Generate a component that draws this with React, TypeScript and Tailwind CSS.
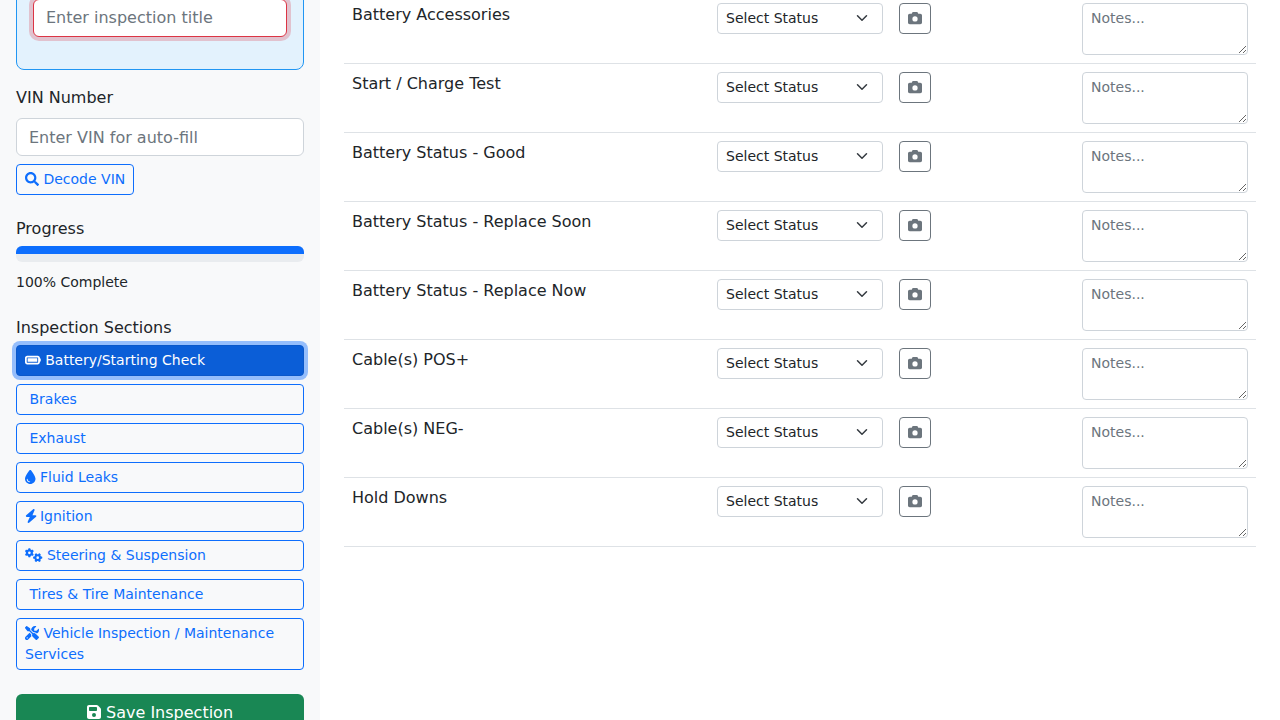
import { FaCamera, FaDroplet, FaBolt, FaGears, FaScrewdriverWrench, FaFloppyDisk, FaBatteryFull } from "react-icons/fa6";
import { FaSearch } from "react-icons/fa";
import type { ReactNode } from "react";

const font = "font-['DejaVu_Sans','Liberation_Sans',sans-serif]";

const sections: { label: string; icon?: ReactNode; active?: boolean }[] = [
  { label: "Battery/Starting Check", icon: <FaBatteryFull className="inline-block w-[15.75px] h-[14px] align-[-2px]" />, active: true },
  { label: "Brakes" },
  { label: "Exhaust" },
  { label: "Fluid Leaks", icon: <FaDroplet className="inline-block w-[10.5px] h-[14px] align-[-2px]" /> },
  { label: "Ignition", icon: <FaBolt className="inline-block w-[12.25px] h-[14px] align-[-2px] -mr-[1.75px]" /> },
  { label: "Steering & Suspension", icon: <FaGears className="inline-block w-[17.5px] h-[14px] align-[-2px]" /> },
  { label: "Tires & Tire Maintenance" },
  { label: "Vehicle Inspection / Maintenance Services", icon: <FaScrewdriverWrench className="inline-block w-[14px] h-[14px] align-[-2px]" /> },
];

const items = [
  "Battery Accessories",
  "Start / Charge Test",
  "Battery Status - Good",
  "Battery Status - Replace Soon",
  "Battery Status - Replace Now",
  "Cable(s) POS+",
  "Cable(s) NEG-",
  "Hold Downs",
];

function Row({ label }: { label: string }) {
  return (
    <tr>
      <td className="p-2 align-top border-b border-[#dee2e6] text-[#212529]">{label}</td>
      <td className="p-2 align-top border-b border-[#dee2e6]">
        <div className="relative h-[31px]">
          <select className="appearance-none block w-full h-[31px] bg-white border border-[#ced4da] rounded-[4px] pl-2 pr-9 py-1 text-[14px] leading-[21px] text-[#212529]">
            <option>Select Status</option>
            <option>Pass</option>
            <option>Fail</option>
          </select>
          <svg viewBox="0 0 16 16" className="absolute right-[13px] top-[9px] w-4 h-3 pointer-events-none">
            <path d="m2 5 6 6 6-6" fill="none" stroke="#343a40" strokeWidth="2" strokeLinecap="round" strokeLinejoin="round" />
          </svg>
        </div>
      </td>
      <td className="p-2 align-top border-b border-[#dee2e6]">
        <button className="flex items-center justify-center w-8 h-[31px] pb-[2px] border border-[#6c757d] rounded-[4px] text-[#6c757d]">
          <FaCamera className="w-[14px] h-[14px]" />
        </button>
      </td>
      <td className="p-2 align-top border-b border-[#dee2e6]">
        <textarea
          placeholder="Notes..."
          className="block w-full h-[52px] border border-[#ced4da] rounded-[4px] px-2 py-1 text-[14px] leading-[21px] text-[#212529] placeholder:text-[#6c757d] resize-y outline-none"
        />
      </td>
    </tr>
  );
}

export default function App() {
  return (
    <div className={`${font} flex h-[720px] w-[1280px] overflow-hidden bg-white text-[16px] leading-6 text-[#212529]`}>
      <aside className="w-[320px] shrink-0 h-[720px] overflow-hidden bg-[#f8f9fa] px-4">
        <div className="-mt-[18px] mb-4 h-[88px] bg-[#e3f2fd] border border-[#2196f3] rounded-lg p-4">
          <input
            placeholder="Enter inspection title"
            className="block w-full h-[38px] pb-[2px] bg-white border border-[#dc3545] rounded-[6px] px-3 text-[16px] leading-6 placeholder:text-[#6c757d] shadow-[0_0_0_4px_rgba(220,53,69,0.25)] outline-none"
          />
        </div>

        <label className="block mb-2">VIN Number</label>
        <input
          placeholder="Enter VIN for auto-fill"
          className="block w-full h-[38px] bg-white border border-[#ced4da] rounded-[6px] px-3 text-[16px] leading-6 placeholder:text-[#6c757d] outline-none"
        />
        <button className="block mt-2 h-[31px] px-2 border border-[#0d6efd] rounded-[4px] text-[14px] leading-[21px] text-[#0d6efd]">
          <FaSearch className="inline-block w-[14px] h-[14px] align-[-2px]" /> Decode VIN
        </button>

        <div className="mt-[22px] mb-[5px]">Progress</div>
        <div className="h-4 rounded-[6px] bg-[#e9ecef] overflow-hidden">
          <div className="h-2 bg-[#0d6efd]" />
        </div>
        <div className="mt-[10px] text-[14px] leading-[21px]">100% Complete</div>

        <div className="mt-[23px] mb-[5px]">Inspection Sections</div>
        <div className="flex flex-col gap-2">
          {sections.map((s) => (
            <button
              key={s.label}
              className={
                s.active
                  ? "block w-full text-left px-2 py-1 border border-[#0a58ca] rounded-[4px] bg-[#0b5ed7] text-[14px] leading-[21px] text-white shadow-[0_0_0_4px_rgba(49,132,253,0.5)]"
                  : "block w-full text-left px-2 py-1 border border-[#0d6efd] rounded-[4px] text-[14px] leading-[21px] text-[#0d6efd]"
              }
            >
              {s.icon ?? <span className="inline-block" />} {s.label}
            </button>
          ))}
        </div>

        <button className="block w-full mt-6 h-[38px] rounded-[6px] bg-[#198754] text-white text-[16px] leading-6">
          <FaFloppyDisk className="inline-block w-[14px] h-[16px] align-[-2px]" /> Save Inspection
        </button>
      </aside>

      <main className="flex-1 px-6 overflow-hidden">
        <table className="w-[912px] table-fixed border-collapse -mt-[5px]">
          <colgroup>
            <col className="w-[365px]" />
            <col className="w-[182px]" />
            <col className="w-[183px]" />
            <col className="w-[182px]" />
          </colgroup>
          <tbody>
            {items.map((label) => (
              <Row key={label} label={label} />
            ))}
          </tbody>
        </table>
      </main>
    </div>
  );
}
